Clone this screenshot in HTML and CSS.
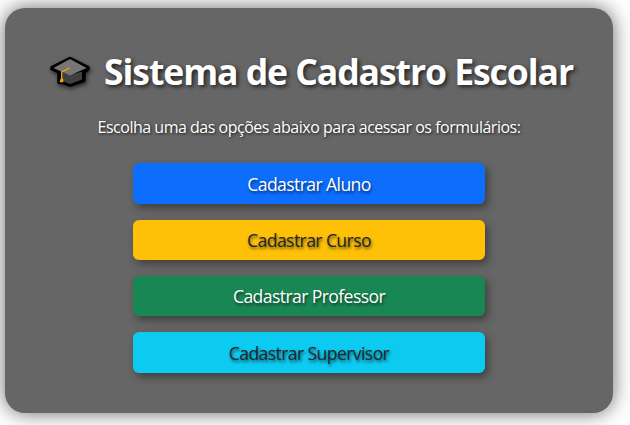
FILE: index.html
```html
<!DOCTYPE html>
<html lang="pt-BR">
<head>
<meta charset="utf-8">
<title>Sistema de Cadastro Escolar</title>
<link rel="stylesheet" href="styles.css">
</head>
<body>
<main class="card">
  <h1 class="title">
    <svg class="cap" viewBox="0 0 44 36" aria-hidden="true">
      <path d="M22 4.500 L40 13.500 V15 L36 18 V26.500 L22 31 L15 28.500 H11 V24 V18 L4 15 V13.500 Z" fill="#000" stroke="#000" stroke-width="3.500" stroke-linejoin="round"/>
      <path d="M14 18 L22 21 L34 17.500 V25.500 L22 30 L14 27 Z" fill="#404040"/>
      <path d="M22 5 L38.500 14 L22 21.500 L5.500 14 Z" fill="#767676"/>
      <path d="M21.500 14 L13.700 18 V26" fill="none" stroke="#f5a30b" stroke-width="1.300"/>
      <path d="M12.500 24.500 H15 L15.500 28.300 H11.700 Z" fill="#f5a30b"/>
    </svg>
    <span class="title-text">Sistema de Cadastro Escolar</span>
  </h1>
  <p class="lead">Escolha uma das opções abaixo para acessar os formulários:</p>
  <nav class="actions">
    <a class="btn btn-blue"><span>Cadastrar Aluno</span></a>
    <a class="btn btn-yellow"><span>Cadastrar Curso</span></a>
    <a class="btn btn-green"><span>Cadastrar Professor</span></a>
    <a class="btn btn-cyan"><span>Cadastrar Supervisor</span></a>
  </nav>
</main>
</body>
</html>
```
FILE: styles.css
```css
* { box-sizing: border-box; }
body {
  margin: 0;
  height: 425px;
  overflow: hidden;
  padding: 8px 17px 12px 5px;
  background: #fff;
  font-family: "Open Sans", "Noto Sans", sans-serif;
}
.card {
  height: 405px;
  padding: 39px 0;
  border-radius: 20px;
  background: #666;
  box-shadow: 0 0 20px rgba(0, 0, 0, .6);
  color: #fff;
  text-shadow: 2px 2px 4px rgba(0, 0, 0, .7);
}
.title {
  display: flex;
  height: 48px;
  margin: 0 0 0 43px;
  font-size: 35.6px;
  line-height: 48px;
  font-weight: 700;
  white-space: nowrap;
}
.cap {
  width: 44px;
  height: 36px;
  margin: 7px 12px 0 0;
  overflow: visible;
  filter: drop-shadow(1px 2px 2px rgba(0, 0, 0, .6));
}
.title-text { letter-spacing: -1.08px; }
.lead {
  margin: 20px 0 24px;
  font-size: 16px;
  line-height: 24px;
  text-align: center;
  letter-spacing: -.49px;
  white-space: nowrap;
  text-shadow: 1px 1px 3px rgba(0, 0, 0, .8);
}
.actions {
  display: grid;
  grid-template-rows: 41px 40px 40px 41px;
  row-gap: 16px;
  width: 352px;
  margin: 0 auto;
}
.btn {
  display: flex;
  align-items: center;
  justify-content: center;
  border-radius: 6px;
  box-shadow: 3px 4px 8px rgba(0, 0, 0, .4);
  font-size: 17.6px;
  line-height: 26px;
  letter-spacing: -.6px;
  text-shadow: 1px 2px 3px rgba(0, 0, 0, .6);
}
.btn-blue { background: #0d6efd; }
.btn-yellow { background: #ffc107; color: #212529; }
.btn-green { background: #198754; }
.btn-cyan { background: #0dcaf0; color: #212529; }
```
